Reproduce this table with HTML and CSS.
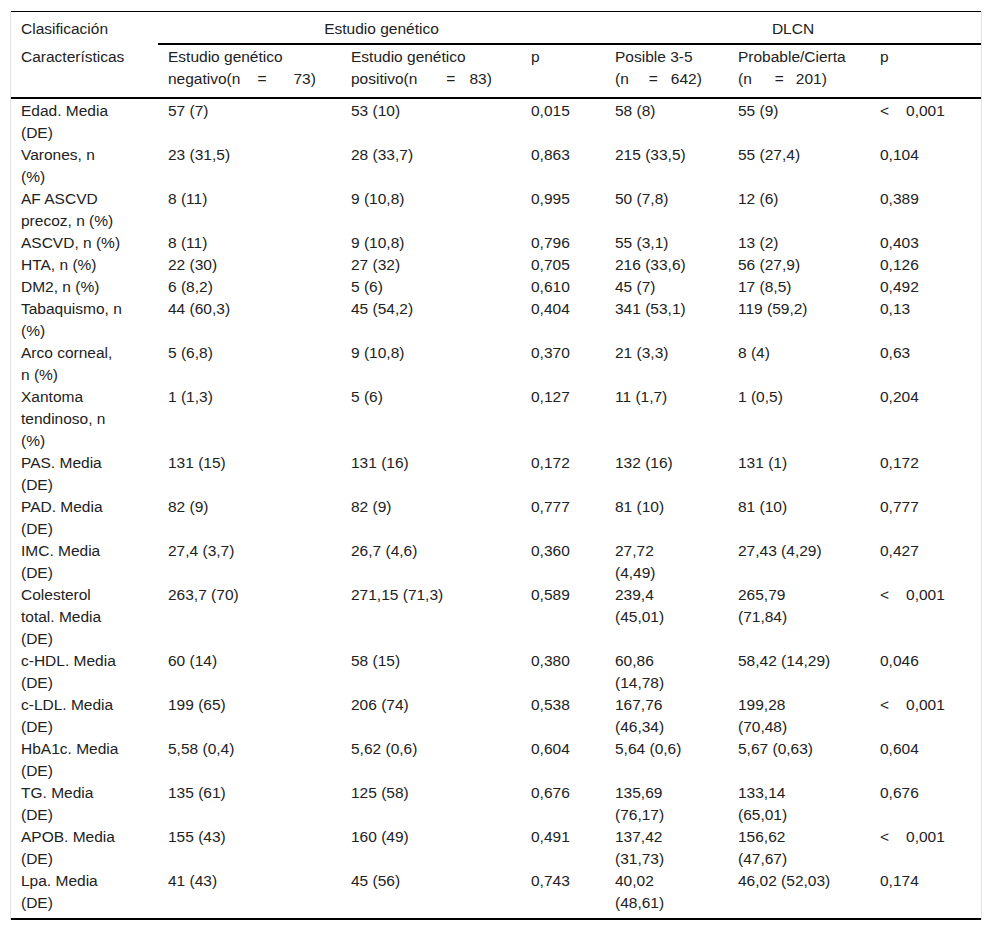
FILE: index.html
```html
<!DOCTYPE html>
<html lang="es">
<head>
<meta charset="utf-8">
<title>Tabla</title>
<link rel="stylesheet" href="styles.css">
</head>
<body>
<div class="wrap">
<table class="tbl">
<colgroup>
<col class="c1"><col class="c2"><col class="c3"><col class="c4"><col class="c5"><col class="c6"><col class="c7">
</colgroup>
<thead>
<tr class="h1">
<th class="nob">Clasificación</th>
<th colspan="3" class="grp">Estudio genético</th>
<th colspan="3" class="grp">DLCN</th>
</tr>
<tr class="h2">
<th>Características</th>
<th>Estudio genético<br>negativo(n<span class="gap g17"></span>=<span class="gap g27"></span>73)</th>
<th>Estudio genético<br>positivo(n<span class="gap g29"></span>=<span class="gap g14"></span>83)</th>
<th>p</th>
<th>Posible 3-5<br>(n<span class="gap g20"></span>=<span class="gap g13"></span>642)</th>
<th>Probable/Cierta<br>(n<span class="gap g23"></span>=<span class="gap g12"></span>201)</th>
<th>p</th>
</tr>
</thead>
<tbody>
<tr class="first"><td>Edad. Media<br>(DE)</td><td>57 (7)</td><td>53 (10)</td><td>0,015</td><td>58 (8)</td><td>55 (9)</td><td>&lt;<span class="gap g17"></span>0,001</td></tr>
<tr><td>Varones, n<br>(%)</td><td>23 (31,5)</td><td>28 (33,7)</td><td>0,863</td><td>215 (33,5)</td><td>55 (27,4)</td><td>0,104</td></tr>
<tr><td>AF ASCVD<br>precoz, n (%)</td><td>8 (11)</td><td>9 (10,8)</td><td>0,995</td><td>50 (7,8)</td><td>12 (6)</td><td>0,389</td></tr>
<tr><td>ASCVD, n (%)</td><td>8 (11)</td><td>9 (10,8)</td><td>0,796</td><td>55 (3,1)</td><td>13 (2)</td><td>0,403</td></tr>
<tr><td>HTA, n (%)</td><td>22 (30)</td><td>27 (32)</td><td>0,705</td><td>216 (33,6)</td><td>56 (27,9)</td><td>0,126</td></tr>
<tr><td>DM2, n (%)</td><td>6 (8,2)</td><td>5 (6)</td><td>0,610</td><td>45 (7)</td><td>17 (8,5)</td><td>0,492</td></tr>
<tr><td>Tabaquismo, n<br>(%)</td><td>44 (60,3)</td><td>45 (54,2)</td><td>0,404</td><td>341 (53,1)</td><td>119 (59,2)</td><td>0,13</td></tr>
<tr><td>Arco corneal,<br>n (%)</td><td>5 (6,8)</td><td>9 (10,8)</td><td>0,370</td><td>21 (3,3)</td><td>8 (4)</td><td>0,63</td></tr>
<tr><td>Xantoma<br>tendinoso, n<br>(%)</td><td>1 (1,3)</td><td>5 (6)</td><td>0,127</td><td>11 (1,7)</td><td>1 (0,5)</td><td>0,204</td></tr>
<tr><td>PAS. Media<br>(DE)</td><td>131 (15)</td><td>131 (16)</td><td>0,172</td><td>132 (16)</td><td>131 (1)</td><td>0,172</td></tr>
<tr><td>PAD. Media<br>(DE)</td><td>82 (9)</td><td>82 (9)</td><td>0,777</td><td>81 (10)</td><td>81 (10)</td><td>0,777</td></tr>
<tr><td>IMC. Media<br>(DE)</td><td>27,4 (3,7)</td><td>26,7 (4,6)</td><td>0,360</td><td>27,72<br>(4,49)</td><td>27,43 (4,29)</td><td>0,427</td></tr>
<tr><td>Colesterol<br>total. Media<br>(DE)</td><td>263,7 (70)</td><td>271,15 (71,3)</td><td>0,589</td><td>239,4<br>(45,01)</td><td>265,79<br>(71,84)</td><td>&lt;<span class="gap g17"></span>0,001</td></tr>
<tr><td>c-HDL. Media<br>(DE)</td><td>60 (14)</td><td>58 (15)</td><td>0,380</td><td>60,86<br>(14,78)</td><td>58,42 (14,29)</td><td>0,046</td></tr>
<tr><td>c-LDL. Media<br>(DE)</td><td>199 (65)</td><td>206 (74)</td><td>0,538</td><td>167,76<br>(46,34)</td><td>199,28<br>(70,48)</td><td>&lt;<span class="gap g17"></span>0,001</td></tr>
<tr><td>HbA1c. Media<br>(DE)</td><td>5,58 (0,4)</td><td>5,62 (0,6)</td><td>0,604</td><td>5,64 (0,6)</td><td>5,67 (0,63)</td><td>0,604</td></tr>
<tr><td>TG. Media<br>(DE)</td><td>135 (61)</td><td>125 (58)</td><td>0,676</td><td>135,69<br>(76,17)</td><td>133,14<br>(65,01)</td><td>0,676</td></tr>
<tr><td>APOB. Media<br>(DE)</td><td>155 (43)</td><td>160 (49)</td><td>0,491</td><td>137,42<br>(31,73)</td><td>156,62<br>(47,67)</td><td>&lt;<span class="gap g17"></span>0,001</td></tr>
<tr class="last"><td>Lpa. Media<br>(DE)</td><td>41 (43)</td><td>45 (56)</td><td>0,743</td><td>40,02<br>(48,61)</td><td>46,02 (52,03)</td><td>0,174</td></tr>
</tbody>
</table>
</div>
</body>
</html>
```

FILE: styles.css
```css
html, body {
  margin: 0;
  padding: 0;
  background: #fff;
}

body {
  font-family: "Liberation Sans", Arial, Helvetica, sans-serif;
  font-size: 15.5px;
  line-height: 22px;
  color: #222;
}

.wrap {
  margin: 11px 10px 0 10px;
  border-left: 1px solid #e2e2e2;
  border-right: 1px solid #e2e2e2;
}

.tbl {
  width: 100%;
  table-layout: fixed;
  border-collapse: separate;
  border-spacing: 0;
  border-top: 1px solid #000;
  border-bottom: 2px solid #000;
}

.c1 { width: 147px; }
.c2 { width: 183px; }
.c3 { width: 180px; }
.c4 { width: 84px; }
.c5 { width: 123px; }
.c6 { width: 142px; }
.c7 { width: auto; }

.tbl th,
.tbl td {
  font-weight: normal;
  text-align: left;
  vertical-align: top;
  padding: 0 4px 0 10px;
  white-space: nowrap;
}

.h1 th {
  padding-top: 6px;
  padding-bottom: 3px;
}

.h1 th.grp {
  text-align: center;
  border-bottom: 2px solid #000;
  padding-left: 0;
  padding-right: 0;
}

.h2 th {
  padding-top: 1px;
  padding-bottom: 7px;
  border-bottom: 2px solid #000;
}

tr.first td {
  padding-top: 1px;
}

tr.last td {
  padding-bottom: 4px;
}

.gap {
  display: inline-block;
  height: 1px;
}

.g12 { width: 12px; }
.g13 { width: 13px; }
.g14 { width: 14px; }
.g17 { width: 17px; }
.g20 { width: 20px; }
.g23 { width: 23px; }
.g27 { width: 27px; }
.g29 { width: 29px; }
```
